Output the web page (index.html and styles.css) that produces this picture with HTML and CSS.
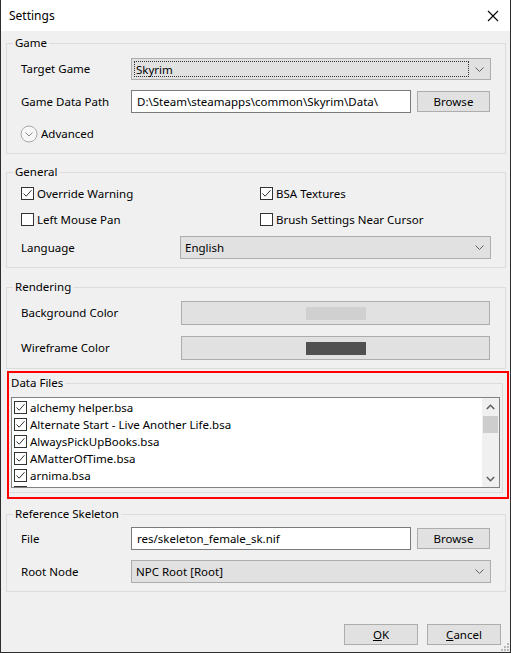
FILE: index.html
```html
<!DOCTYPE html>
<html>
<head>
<meta charset="utf-8">
<link rel="stylesheet" href="styles.css">
</head>
<body>
<div class="window">
  <div class="titlebar">
    <span class="title">Settings</span>
    <svg class="close" width="12" height="12" viewBox="0 0 12 12"><path d="M1 1L11 11M11 1L1 11" stroke="#000" stroke-width="1.1" fill="none"/></svg>
  </div>
  <div class="content">
    <fieldset class="group">
      <legend>Game</legend>
      <div class="gbody game">
        <div class="row r-combo">
          <span class="label">Target Game</span>
          <div class="combo focus w360"><span class="focusbox">Skyrim</span><svg class="chev" width="9" height="5" viewBox="0 0 9 5"><path d="M0.5 0.5L4.5 4.5L8.5 0.5" stroke="#606060" fill="none"/></svg></div>
        </div>
        <div class="row r-path">
          <span class="label">Game Data Path</span>
          <div class="input w280">D:\Steam\steamapps\common\Skyrim\Data\</div>
          <div class="btn browse">Browse</div>
        </div>
        <div class="row r-adv">
          <svg class="advicon" width="18" height="18" viewBox="0 0 18 18"><circle cx="9" cy="9" r="8" fill="#f7f7f7" stroke="#a8a8a8"/><path d="M5.5 7.5L9 11L12.5 7.5" stroke="#8a8a8a" fill="none"/></svg>
          <span class="advtext">Advanced</span>
        </div>
      </div>
    </fieldset>

    <fieldset class="group g-general">
      <legend>General</legend>
      <div class="gbody general">
        <div class="row r-cb">
          <label class="check col1"><svg class="cb" width="13" height="13" viewBox="0 0 13 13"><rect x="0.5" y="0.5" width="12" height="12" fill="#fff" stroke="#333"/><path d="M2.5 6.5L5.2 9.2L10.5 3.2" fill="none" stroke="#333"/></svg>Override Warning</label>
          <label class="check"><svg class="cb" width="13" height="13" viewBox="0 0 13 13"><rect x="0.5" y="0.5" width="12" height="12" fill="#fff" stroke="#333"/><path d="M2.5 6.5L5.2 9.2L10.5 3.2" fill="none" stroke="#333"/></svg>BSA Textures</label>
        </div>
        <div class="row r-cb r-cb2">
          <label class="check col1"><svg class="cb" width="13" height="13" viewBox="0 0 13 13"><rect x="0.5" y="0.5" width="12" height="12" fill="#fff" stroke="#333"/></svg>Left Mouse Pan</label>
          <label class="check"><svg class="cb" width="13" height="13" viewBox="0 0 13 13"><rect x="0.5" y="0.5" width="12" height="12" fill="#fff" stroke="#333"/></svg>Brush Settings Near Cursor</label>
        </div>
        <div class="row r-lang">
          <span class="label wide">Language</span>
          <div class="combo w311"><span class="ctext">English</span><svg class="chev" width="9" height="5" viewBox="0 0 9 5"><path d="M0.5 0.5L4.5 4.5L8.5 0.5" stroke="#606060" fill="none"/></svg></div>
        </div>
      </div>
    </fieldset>

    <fieldset class="group g-render">
      <legend>Rendering</legend>
      <div class="gbody render">
        <div class="row r-color">
          <span class="label wide2">Background Color</span>
          <div class="colorbtn"><span class="swatch bg"></span></div>
        </div>
        <div class="row r-color r-color2">
          <span class="label wide2">Wireframe Color</span>
          <div class="colorbtn"><span class="swatch wf"></span></div>
        </div>
      </div>
    </fieldset>

    <fieldset class="group g-data">
      <legend>Data Files</legend>
      <div class="gbody data">
        <div class="listbox">
          <div class="items">
            <div class="item"><svg class="cb" width="13" height="13" viewBox="0 0 13 13"><rect x="0.5" y="0.5" width="12" height="12" fill="#fff" stroke="#333"/><path d="M2.5 6.5L5.2 9.2L10.5 3.2" fill="none" stroke="#333"/></svg>alchemy helper.bsa</div>
            <div class="item"><svg class="cb" width="13" height="13" viewBox="0 0 13 13"><rect x="0.5" y="0.5" width="12" height="12" fill="#fff" stroke="#333"/><path d="M2.5 6.5L5.2 9.2L10.5 3.2" fill="none" stroke="#333"/></svg>Alternate Start - Live Another Life.bsa</div>
            <div class="item"><svg class="cb" width="13" height="13" viewBox="0 0 13 13"><rect x="0.5" y="0.5" width="12" height="12" fill="#fff" stroke="#333"/><path d="M2.5 6.5L5.2 9.2L10.5 3.2" fill="none" stroke="#333"/></svg>AlwaysPickUpBooks.bsa</div>
            <div class="item"><svg class="cb" width="13" height="13" viewBox="0 0 13 13"><rect x="0.5" y="0.5" width="12" height="12" fill="#fff" stroke="#333"/><path d="M2.5 6.5L5.2 9.2L10.5 3.2" fill="none" stroke="#333"/></svg>AMatterOfTime.bsa</div>
            <div class="item"><svg class="cb" width="13" height="13" viewBox="0 0 13 13"><rect x="0.5" y="0.5" width="12" height="12" fill="#fff" stroke="#333"/><path d="M2.5 6.5L5.2 9.2L10.5 3.2" fill="none" stroke="#333"/></svg>arnima.bsa</div>
            <div class="item"><svg class="cb" width="13" height="13" viewBox="0 0 13 13"><rect x="0.5" y="0.5" width="12" height="12" fill="#fff" stroke="#333"/><path d="M2.5 6.5L5.2 9.2L10.5 3.2" fill="none" stroke="#333"/></svg></div>
          </div>
          <div class="scrollbar">
            <div class="sbtn"><svg width="9" height="6" viewBox="0 0 9 6"><path d="M0.8 5L4.5 1.3L8.2 5" stroke="#606060" stroke-width="1.6" fill="none"/></svg></div>
            <div class="track"><div class="thumb"></div></div>
            <div class="sbtn"><svg width="9" height="6" viewBox="0 0 9 6"><path d="M0.8 1L4.5 4.7L8.2 1" stroke="#606060" stroke-width="1.6" fill="none"/></svg></div>
          </div>
        </div>
      </div>
    </fieldset>

    <fieldset class="group g-skel">
      <legend>Reference Skeleton</legend>
      <div class="gbody skel">
        <div class="row r-file">
          <span class="label">File</span>
          <div class="input w280">res/skeleton_female_sk.nif</div>
          <div class="btn browse">Browse</div>
        </div>
        <div class="row r-root">
          <span class="label">Root Node</span>
          <div class="combo w360"><span class="ctext">NPC Root [Root]</span><svg class="chev" width="9" height="5" viewBox="0 0 9 5"><path d="M0.5 0.5L4.5 4.5L8.5 0.5" stroke="#606060" fill="none"/></svg></div>
        </div>
      </div>
    </fieldset>

    <div class="footer">
      <div class="btn dlg"><span class="u">O</span>K</div>
      <div class="btn dlg"><span class="u">C</span>ancel</div>
    </div>
  </div>
  <svg class="grip" width="8" height="8" viewBox="0 0 8 8"><g fill="#b8b8b8"><rect x="6" y="0" width="2" height="2"/><rect x="3" y="3" width="2" height="2"/><rect x="6" y="3" width="2" height="2"/><rect x="0" y="6" width="2" height="2"/><rect x="3" y="6" width="2" height="2"/><rect x="6" y="6" width="2" height="2"/></g></svg>
  <div class="annot"></div>
</div>
</body>
</html>
```
FILE: styles.css
```css
* { box-sizing: border-box; }
html, body { margin: 0; padding: 0; }
body {
  font-family: "Noto Sans", "Open Sans", sans-serif;
  font-size: 11.5px;
  color: #000;
  background: #f0f0f0;
}
.window {
  position: relative;
  width: 511px;
  height: 653px;
  background: #f0f0f0;
  border-left: 1px solid #2d2d2d;
  border-right: 1px solid #2d2d2d;
  border-bottom: 1px solid #2d2d2d;
  display: flex;
  flex-direction: column;
}
.titlebar {
  height: 31px;
  background: #fff;
  display: flex;
  align-items: center;
  justify-content: space-between;
  padding: 0 11px 0 8px;
  flex: none;
}
.title { font-size: 12px; line-height: 16px; }
.close { display: block; }
.content {
  flex: 1;
  display: flex;
  flex-direction: column;
  padding: 4px 4px 0 5px;
}
.group {
  margin: 0;
  padding: 0;
  border: 1px solid #dcdcdc;
  min-width: 0;
}
.group legend {
  margin-left: 6px;
  padding: 0 2px;
  line-height: 16px;
  height: 16px;
}
.gbody { padding: 0 14px; }
.row { display: flex; align-items: center; }
.label { width: 110px; flex: none; line-height: 16px; }
.label.wide { width: 159px; }
.label.wide2 { width: 160px; }

.game { padding-top: 7px; padding-bottom: 11px; }
.r-combo { height: 22px; }
.r-path { height: 23px; margin-top: 10px; }
.r-adv { height: 17px; margin-top: 12px; margin-left: -1px; }
.advicon { display: block; flex: none; }
.advtext { margin-left: 3px; line-height: 16px; }

.combo {
  height: 22px;
  background: #e1e1e1;
  border: 1px solid #adadad;
  display: flex;
  align-items: center;
  justify-content: space-between;
  padding: 0 6px 0 3px;
}
.combo.focus { padding: 2px 6px 2px 2px; }
.focusbox {
  flex: 1;
  height: 100%;
  border: 1px dotted #333;
  margin-right: 6px;
  display: flex;
  align-items: center;
  padding-left: 1px;
}
.ctext { line-height: 16px; }
.combo .ctext { padding-left: 1px; }
.chev { display: block; flex: none; }
.w360 { width: 360px; }
.w311 { width: 311px; height: 23px; }
.w280 { width: 280px; }
.input {
  height: 23px;
  background: #fff;
  border: 1px solid #7a7a7a;
  display: flex;
  align-items: center;
  padding-left: 5px;
  white-space: nowrap;
  overflow: hidden;
}
.btn {
  background: #e1e1e1;
  border: 1px solid #adadad;
  display: flex;
  align-items: center;
  justify-content: center;
}
.browse { width: 73px; height: 21px; margin-left: 6px; }

.g-general { margin-top: 10px; }
.general { padding-top: 7px; padding-bottom: 8px; }
.r-cb { height: 13px; }
.r-cb2 { margin-top: 13px; }
.check { display: flex; align-items: center; line-height: 16px; }
.check .cb { margin-right: 3px; display: block; flex: none; }
.col1 { width: 239px; }
.r-lang { height: 23px; margin-top: 10px; }

.g-render { margin-top: 11px; }
.render { padding-top: 6px; padding-bottom: 8px; }
.r-color { height: 24px; }
.r-color2 { margin-top: 11px; }
.colorbtn {
  width: 309px;
  height: 24px;
  background: #e1e1e1;
  border: 1px solid #adadad;
  display: flex;
  align-items: center;
  justify-content: center;
}
.swatch { width: 60px; height: 13px; display: block; }
.swatch.bg { background: #d0d0d0; }
.swatch.wf { background: #505050; }

.g-data { margin-top: 6px; margin-left: 1px; margin-right: 3px; }
.g-data legend { margin-left: 1px; }
.data { padding: 6px 2px 4px 3px; }
.listbox {
  height: 91px;
  background: #fff;
  border: 1px solid #828282;
  display: flex;
  overflow: hidden;
}
.items { flex: 1; padding-top: 1px; padding-left: 2px; overflow: hidden; }
.item { height: 17px; display: flex; align-items: center; white-space: nowrap; line-height: 16px; }
.item .cb { display: block; margin-right: 3px; flex: none; }
.scrollbar {
  width: 17px;
  flex: none;
  background: #f0f0f0;
  display: flex;
  flex-direction: column;
}
.sbtn { height: 17px; display: flex; align-items: center; justify-content: center; flex: none; }
.sbtn svg { display: block; }
.track { flex: 1; }
.thumb { height: 17px; background: #cdcdcd; margin: 1px 1px 0 1px; }

.g-skel { margin-top: 13px; }
.skel { padding-top: 5px; padding-bottom: 8px; }
.r-file { height: 23px; }
.r-root { height: 23px; margin-top: 10px; }
.r-root .combo { height: 23px; }

.footer {
  margin-top: auto;
  display: flex;
  justify-content: flex-end;
  padding: 0 5px 7px 0;
}
.dlg { width: 74px; height: 21px; margin-left: 9px; line-height: 16px; }
.u { text-decoration: underline; }

.grip { position: absolute; right: 1px; bottom: 1px; display: block; }
.annot {
  position: absolute;
  left: 6px;
  top: 371px;
  width: 502px;
  height: 128px;
  border: 2px solid #ff0000;
  pointer-events: none;
}
```
